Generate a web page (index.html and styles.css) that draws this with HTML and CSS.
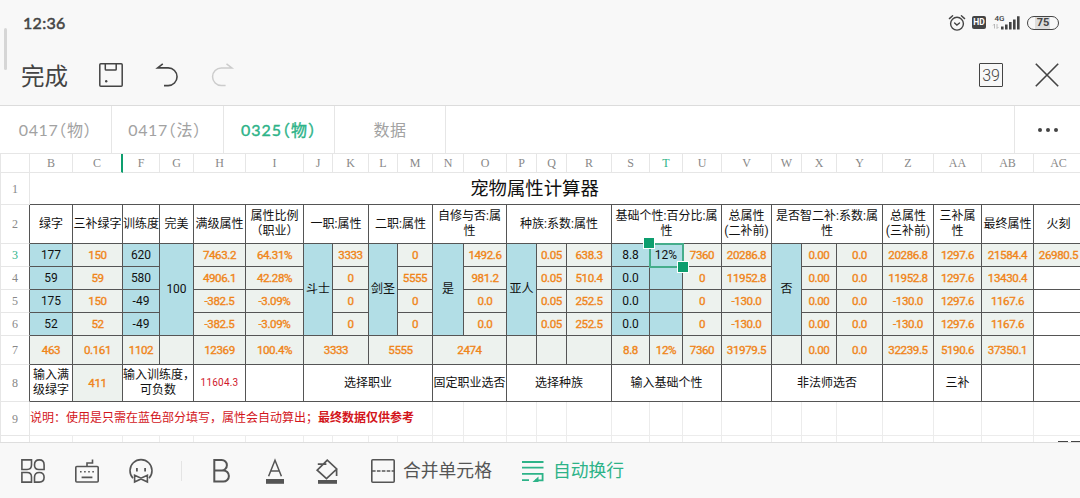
FILE: index.html
```html
<!DOCTYPE html>
<html lang="zh-CN">
<head>
    <meta charset="UTF-8">
    <meta name="viewport" content="width=device-width, initial-scale=1.0">
    <title>宠物属性计算器</title>
    <link rel="stylesheet" href="styles.css">
</head>
<body>
    <div class="edge-handle"></div>
    <header class="header">
        <div class="status-bar">
            <span class="time">12:36</span>
            <div class="status-icons">
                <svg class="alarm" width="18" height="18" viewBox="0 0 18 18" fill="none" stroke="#444" stroke-width="1.4" stroke-linecap="round">
                    <circle cx="9" cy="9.7" r="6.4"/>
                    <path d="M6.6 9l2.3 2 2.6-2M1.4 4.6L4.6 1.8M16.6 4.6L13.4 1.8"/>
                </svg>
                <span class="hd">HD</span>
                <svg class="signal" width="28" height="18" viewBox="0 0 28 18">
                    <text x="1.5" y="6.5" class="net">4G</text>
                    <path d="M1.5 10v4.5M0 11.5L1.5 10M4 10v4.5M4 14.5l1.5-1.5" fill="none" stroke="#aaa" stroke-width=".8"/>
                    <path d="M8 12.5h2.6V15.5H8zM12 10.5h2.6V15.5H12zM16 8h2.6v7.5H16zM20 5.5h2.6v10H20zM24 2.3h2.6v13.2H24z" fill="#444"/>
                </svg>
                <span class="battery">75</span>
            </div>
        </div>
        <div class="app-bar">
            <span class="done">完成</span>
            <svg class="save" width="24" height="24" viewBox="0 0 24 24" fill="none" stroke="#444" stroke-width="1.5">
                <rect x=".8" y=".8" width="22.4" height="22.4" rx="1"/>
                <path d="M6.3 1v5.2q0 .8.8.8h9.3q.8 0 .8-.8V1"/>
                <circle cx="7.2" cy="18.3" r="1.2" fill="#444" stroke="none"/>
            </svg>
            <svg class="undo" width="24" height="24" viewBox="0 0 24 24" fill="none" stroke="#444" stroke-width="1.6">
                <path d="M6.8.8L1.6 4.9H12.2a8.85 8.85 0 0 1 0 17.7H8"/>
            </svg>
            <svg class="redo" width="24" height="24" viewBox="0 0 24 24" fill="none" stroke="#ccc" stroke-width="1.5">
                <path d="M14.5.8l5.4 4.1H9.4a8.85 8.85 0 0 0 0 17.7h4.2"/>
            </svg>
            <span class="sheet-count">39</span>
            <svg class="close" width="24" height="24" viewBox="0 0 24 24" fill="none" stroke="#444" stroke-width="1.6">
                <path d="M.8.8l22.4 22.4M23.2.8L.8 23.2"/>
            </svg>
        </div>
    </header>

    <nav class="tabs">
        <div class="tab first">0417（物）</div>
        <div class="tab second">0417（法）</div>
        <div class="tab active">0325（物）</div>
        <div class="tab">数据</div>
        <div class="more"><i></i><i></i><i></i></div>
    </nav>

    <main class="sheet">
        <table>
            <colgroup>
                <col class="w30"><col class="w43"><col class="w50"><col class="w37"><col class="w34"><col class="w52"><col class="w58">
                <col class="w29"><col class="w36"><col class="w29"><col class="w35"><col class="w31"><col class="w43"><col class="w30">
                <col class="w30"><col class="w45"><col class="w38"><col class="w33"><col class="w39"><col class="w50"><col class="w30">
                <col class="w35"><col class="w46"><col class="w51"><col class="w48"><col class="w52"><col class="w50">
            </colgroup>
            <tr class="letters">
                <th></th><th>B</th><th class="hidden-mark">C</th><th>F</th><th>G</th><th>H</th><th>I</th><th>J</th><th>K</th><th>L</th><th>M</th><th>N</th><th>O</th><th>P</th><th>Q</th><th>R</th><th>S</th><th class="current">T</th><th>U</th><th>V</th><th>W</th><th>X</th><th>Y</th><th>Z</th><th>AA</th><th>AB</th><th>AC</th>
            </tr>
            <tr class="r1">
                <th>1</th><td colspan="25" class="title">宠物属性计算器</td><td class="title"></td>
            </tr>
            <tr class="r2">
                <th>2</th><td>绿字</td><td>三补绿字</td><td>训练度</td><td>完美</td><td>满级属性</td><td>属性比例<br>（职业）</td>
                <td colspan="2">一职:属性</td><td colspan="2">二职:属性</td><td colspan="2">自修与否:属<br>性</td><td colspan="3">种族:系数:属性</td>
                <td colspan="3">基础个性:百分比:属<br>性</td><td>总属性<br>(二补前)</td><td colspan="3">是否智二补:系数:属<br>性</td>
                <td>总属性<br>(三补前)</td><td>三补属<br>性</td><td>最终属性</td><td>火刻</td>
            </tr>
            <tr class="r3">
                <th class="current">3</th><td class="in">177</td><td class="num">150</td><td class="in">620</td><td class="in" rowspan="4">100</td><td class="num">7463.2</td><td class="num">64.31%</td>
                <td class="in" rowspan="4">斗士</td><td class="num">3333</td><td class="in" rowspan="4">剑圣</td><td class="num">0</td><td class="in" rowspan="4">是</td><td class="num">1492.6</td>
                <td class="in" rowspan="4">亚人</td><td class="num">0.05</td><td class="num">638.3</td><td class="in">8.8</td>
                <td class="in selected">12%<div class="selection"><i class="knob start"></i><i class="knob end"></i></div></td>
                <td class="num">7360</td><td class="num">20286.8</td><td class="in" rowspan="4">否</td><td class="num">0.00</td><td class="num">0.0</td><td class="num">20286.8</td><td class="num">1297.6</td><td class="num">21584.4</td><td class="num">26980.5</td>
            </tr>
            <tr class="r4">
                <th>4</th><td class="in">59</td><td class="num">59</td><td class="in">580</td><td class="num">4906.1</td><td class="num">42.28%</td><td class="num">0</td><td class="num">5555</td><td class="num">981.2</td>
                <td class="num">0.05</td><td class="num">510.4</td><td class="in">0.0</td><td class="in"></td><td class="num">0</td><td class="num">11952.8</td><td class="num">0.00</td><td class="num">0.0</td><td class="num">11952.8</td><td class="num">1297.6</td><td class="num">13430.4</td><td></td>
            </tr>
            <tr class="r5">
                <th>5</th><td class="in">175</td><td class="num">150</td><td class="in">-49</td><td class="num">-382.5</td><td class="num">-3.09%</td><td class="num">0</td><td class="num">0</td><td class="num">0.0</td>
                <td class="num">0.05</td><td class="num">252.5</td><td class="in">0.0</td><td class="in"></td><td class="num">0</td><td class="num">-130.0</td><td class="num">0.00</td><td class="num">0.0</td><td class="num">-130.0</td><td class="num">1297.6</td><td class="num">1167.6</td><td></td>
            </tr>
            <tr class="r6">
                <th>6</th><td class="in">52</td><td class="num">52</td><td class="in">-49</td><td class="num">-382.5</td><td class="num">-3.09%</td><td class="num">0</td><td class="num">0</td><td class="num">0.0</td>
                <td class="num">0.05</td><td class="num">252.5</td><td class="in">0.0</td><td class="in"></td><td class="num">0</td><td class="num">-130.0</td><td class="num">0.00</td><td class="num">0.0</td><td class="num">-130.0</td><td class="num">1297.6</td><td class="num">1167.6</td><td></td>
            </tr>
            <tr class="r7">
                <th>7</th><td class="num">463</td><td class="num">0.161</td><td class="num">1102</td><td class="num"></td><td class="num">12369</td><td class="num">100.4%</td>
                <td class="num" colspan="2">3333</td><td class="num" colspan="2">5555</td><td class="num" colspan="2">2474</td><td class="num"></td><td class="num"></td><td class="num"></td>
                <td class="num">8.8</td><td class="num">12%</td><td class="num">7360</td><td class="num">31979.5</td><td class="num"></td><td class="num">0.00</td><td class="num">0.0</td><td class="num">32239.5</td><td class="num">5190.6</td><td class="num">37350.1</td><td></td>
            </tr>
            <tr class="r8">
                <th>8</th><td>输入满<br>级绿字</td><td class="num">411</td><td colspan="2">输入训练度，<br>可负数</td><td class="red">11604.3</td><td></td>
                <td colspan="4">选择职业</td><td colspan="2">固定职业选否</td><td colspan="3">选择种族</td><td colspan="3">输入基础个性</td><td></td><td colspan="3">非法师选否</td><td></td><td>三补</td><td></td><td></td>
            </tr>
            <tr class="r9 plain">
                <th>9</th><td colspan="10" class="note">说明：使用是只需在蓝色部分填写，属性会自动算出；<b>最终数据仅供参考</b></td>
                <td></td><td></td><td></td><td></td><td></td><td></td><td></td><td></td><td></td><td></td><td></td><td></td><td></td><td></td><td></td><td></td>
            </tr>
            <tr class="r10 plain">
                <th></th><td></td><td></td><td></td><td></td><td></td><td></td><td></td><td></td><td></td><td></td><td></td><td></td><td></td><td></td><td></td><td></td><td></td><td></td><td></td><td></td><td></td><td></td><td></td><td></td><td></td><td><div class="cut"><i></i><i></i></div></td>
            </tr>
        </table>
    </main>

    <footer class="toolbar">
        <svg class="t-apps" width="24" height="24" viewBox="0 0 24 24" fill="none" stroke="#555" stroke-width="1.6">
            <path d="M.9.9h9.6v5.2q0 4.4-4.4 4.4H.9zM23.1 10.5h-5.2q-4.4 0-4.4-4.6 0-5 4.8-5t4.8 5zM.9 13.5h5.2q4.4 0 4.4 4.4v5.2H.9zM13.5 23.1v-4.8q0-4.8 4.8-4.8t4.8 4.8-4.8 4.8z"/>
        </svg>
        <svg class="t-keyboard" width="24" height="24" viewBox="0 0 24 24" fill="none" stroke="#555" stroke-width="1.6">
            <rect x=".8" y="7.5" width="22.4" height="15.5" rx="1"/>
            <path d="M12 7.5V4h5.5V.6M6.6 18.4h10.8"/>
            <path d="M5 12.8h14" stroke-dasharray="1.6 2.5"/>
        </svg>
        <svg class="t-smile" width="24" height="24" viewBox="0 0 24 24" fill="none" stroke="#555" stroke-width="1.6">
            <path d="M4 19.2a11 11 0 1 1 16 0"/>
            <path d="M7.9 9v3.6M16.1 9v3.6" stroke-width="1.8"/>
            <path d="M5.6 16.2l6.4 3 6.4-3v6.8l-6.4-3-6.4 3z"/>
        </svg>
        <span class="divider"></span>
        <svg class="t-bold" width="24" height="24" viewBox="0 0 24 24" fill="none" stroke="#555" stroke-width="2">
            <path d="M4.3 1h7.4a5.2 5.2 0 0 1 0 10.4H4.3zM4.3 11.4h9a5.6 5.6 0 0 1 0 11.2h-9z"/>
        </svg>
        <svg class="t-color" width="24" height="24" viewBox="0 0 24 24" fill="none" stroke="#555" stroke-width="1.5">
            <path d="M5.6 17.3L12 1.2l6.4 16.1M8 12h8"/>
            <path d="M3 20h18v4.8H3z" fill="#555" stroke="none"/>
        </svg>
        <svg class="t-fill" width="24" height="24" viewBox="0 0 24 24" fill="none" stroke="#555" stroke-width="1.7">
            <path d="M12.3 1.2L2.2 11.2l9.3 8.4 10.2-9.6zM2.8 5.2h8.6M21.6 9.6v7.4"/>
            <path d="M3 21h19v3.8H3z" fill="#555" stroke="none"/>
        </svg>
        <svg class="t-merge" width="24" height="24" viewBox="0 0 24 24" fill="none" stroke="#555" stroke-width="1.6">
            <rect x=".8" y=".8" width="22.4" height="22.4" rx="1"/>
            <path d="M1 12h22" stroke-dasharray="3.6 1.3"/>
        </svg>
        <span class="label">合并单元格</span>
        <svg class="t-wrap" width="24" height="24" viewBox="0 0 24 24" fill="none" stroke="#2db388" stroke-width="1.8">
            <path d="M1 3h21.5M1 8.6h21.5M1 14.8h21.5M1 21.2h7M21.6 15v6.4h-7.5"/>
            <path d="M17.5 17.6v5.4h-6z" fill="#2db388" stroke="none"/>
        </svg>
        <span class="label green">自动换行</span>
    </footer>
</body>
</html>
```
FILE: styles.css
```css
* {
    box-sizing: border-box;
}

body {
    margin: 0;
    width: 1080px;
    height: 498px;
    overflow: hidden;
    display: flex;
    flex-direction: column;
    background-color: #fff;
    font-family: Roboto, "Noto Sans CJK SC", sans-serif;
    color: #444;
}

svg {
    display: block;
    flex: none;
    overflow: visible;
}

.edge-handle {
    position: absolute;
    left: 4px;
    top: 28px;
    width: 3px;
    height: 42px;
    border-radius: 2px;
    background-color: #d6d6d6;
}

/* header */
.header {
    flex: none;
    height: 106px;
    background-color: #f8f8f8;
    border-bottom: 1px solid #dcdcdc;
}

.status-bar {
    height: 45px;
    padding: 0 21px 0 23px;
    display: flex;
    align-items: center;
    justify-content: space-between;
}

.time {
    font-family: Lato, sans-serif;
    font-size: 16px;
    letter-spacing: 0.3px;
    -webkit-text-stroke: 0.5px #444;
}

.status-icons {
    display: flex;
    align-items: center;
}

.hd {
    width: 14px;
    height: 13px;
    margin: 0 7px 0 6px;
    border-radius: 2px;
    background-color: #444;
    color: #fff;
    font-size: 8.5px;
    font-weight: bold;
    line-height: 13px;
    text-align: center;
}

.net {
    font-size: 8px;
    font-weight: 500;
    fill: #444;
}

.battery {
    width: 32px;
    height: 14px;
    margin-left: 6px;
    border: 1.5px solid #444;
    border-radius: 7px;
    background: linear-gradient(90deg, #f8f8f8 25%, #ddd 25%, #ddd 75%, #f8f8f8 75%);
    font-size: 11px;
    font-weight: bold;
    line-height: 12px;
    text-align: center;
}

.app-bar {
    height: 60px;
    padding: 0 21px;
    display: flex;
    align-items: center;
}

.done {
    width: 78px;
    padding-top: 3px;
    font-size: 23.5px;
    line-height: 30px;
}

.undo {
    margin-left: 33px;
}

.redo {
    margin-left: 32px;
}

.sheet-count {
    width: 24px;
    height: 24px;
    margin-left: auto;
    margin-right: 32px;
    border: 1.5px solid #444;
    border-radius: 1px;
    font-size: 16px;
    font-weight: 300;
    line-height: 23px;
    text-align: center;
}

/* sheet tabs */
.tabs {
    flex: none;
    height: 47px;
    display: flex;
}

.tab {
    width: 111px;
    border-right: 1px solid #e6e6e6;
    font-family: Lato, "Noto Sans CJK SC", sans-serif;
    font-size: 16px;
    font-feature-settings: "halt";
    letter-spacing: 0.6px;
    line-height: 47px;
    text-align: center;
    color: #a2a2a2;
}

.tab.first {
    width: 112px;
}

.tab.second {
    width: 112px;
    padding-right: 5px;
}

.tab.active {
    color: #2db388;
    letter-spacing: 1px;
    -webkit-text-stroke: 0.4px #2db388;
}

.more {
    width: 66px;
    margin-left: auto;
    border-left: 1px solid #e6e6e6;
    display: flex;
    align-items: center;
    justify-content: center;
    gap: 4px;
}

.more i {
    width: 4px;
    height: 4px;
    border-radius: 50%;
    background-color: #444;
}

/* sheet */
.sheet {
    flex: none;
    height: 289px;
    overflow: hidden;
    border-top: 1px solid #e6e6e6;
}

table {
    width: 1084px;
    table-layout: fixed;
    border-collapse: separate;
    border-spacing: 0;
}

.w29 { width: 29px; }
.w30 { width: 30px; }
.w31 { width: 31px; }
.w33 { width: 33px; }
.w34 { width: 34px; }
.w35 { width: 35px; }
.w36 { width: 36px; }
.w37 { width: 37px; }
.w38 { width: 38px; }
.w39 { width: 39px; }
.w43 { width: 43px; }
.w45 { width: 45px; }
.w46 { width: 46px; }
.w48 { width: 48px; }
.w50 { width: 50px; }
.w51 { width: 51px; }
.w52 { width: 52px; }
.w58 { width: 58px; }

th {
    padding: 0;
    border-right: 1px solid #e6e6e6;
    border-bottom: 1px solid #e6e6e6;
    font-family: "Liberation Serif", serif;
    font-size: 12px;
    font-weight: normal;
    line-height: 14px;
    color: #888;
}

th:first-child {
    border-left: 1px solid #e6e6e6;
}

th.current {
    color: #2db388;
}

.letters th.hidden-mark {
    border-right: 2px solid #0d9e6e;
}

td {
    padding: 0;
    border-right: 1px solid #555;
    border-bottom: 1px solid #555;
    font-size: 12px;
    line-height: 14.6px;
    text-align: center;
    white-space: nowrap;
    color: #111;
}

.r2 th, .r3 th, .r4 th, .r5 th, .r6 th, .r7 th, .r8 th {
    border-right-color: #555;
}

/* top edge of the bordered block */
.letters { height: 19px; }
.r1 { height: 32px; }
.r2 { height: 39px; }
.r3, .r4, .r5, .r6 { height: 23px; }
.r7 { height: 29px; }
.r8 { height: 37px; }
.r9 { height: 34px; }
.r10 { height: 7px; }

.r10 th, .r10 td {
    line-height: 0;
    border-bottom: none;
}

.title {
    padding-left: 5px;
    border-right: none;
    font-size: 18.4px;
    line-height: 24px;
}

.in {
    background-color: #b2dee6;
}

.num {
    background-color: #edf2ee;
    font-size: 11.6px;
    letter-spacing: -0.4px;
    -webkit-text-stroke: 0.35px #f08519;
    color: #f08519;
}

.red {
    font-size: 10px;
    letter-spacing: 0.2px;
    color: #d0182c;
}

.plain td {
    border-color: #ececec;
}

.plain .note {
    padding-left: 0;
    font-size: 12px;
    text-align: left;
    color: #d3161c;
}

/* selected cell */
.selected {
    position: relative;
}

.selection {
    position: absolute;
    z-index: 1;
    left: -1px;
    top: -1px;
    width: 35px;
    height: 25px;
    border: 2px solid #45ad8b;
}

.knob {
    position: absolute;
    width: 12px;
    height: 12px;
    border: 1px solid #fff;
    background-color: #0d9e6e;
}

.knob.start {
    left: -8px;
    top: -8px;
}

.knob.end {
    right: -7px;
    bottom: -7px;
}

.cut {
    display: flex;
    gap: 3px;
    margin: 4px 0 0 24px;
}

.cut i {
    width: 10px;
    height: 1px;
    background-color: #444;
}

/* bottom toolbar */
.toolbar {
    flex: none;
    height: 56px;
    padding-left: 21px;
    border-top: 1px solid #dedede;
    background-color: #f8f8f8;
    display: flex;
    align-items: center;
}

.t-keyboard, .t-smile {
    margin-left: 30px;
}

.divider {
    width: 1px;
    height: 20px;
    margin-left: 28px;
    background-color: #e4e4e4;
}

.t-bold {
    margin-left: 28px;
}

.t-color {
    margin-left: 29px;
}

.t-fill {
    margin-left: 28px;
}

.t-merge {
    margin-left: 32px;
}

.label {
    margin-left: 8px;
    font-size: 17.8px;
    line-height: 24px;
    color: #555;
}

.t-wrap {
    margin-left: 29px;
}

.label.green {
    color: #2db388;
}
```
